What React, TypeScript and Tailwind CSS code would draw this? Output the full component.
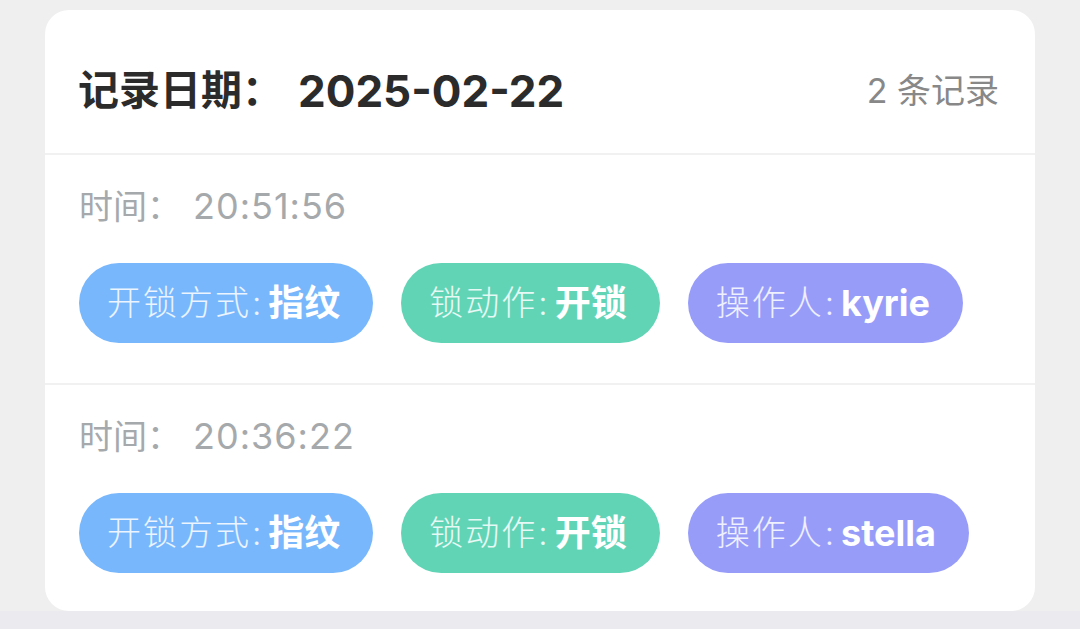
const records = [
  { time: '20:51:56', method: '指纹', action: '开锁', user: 'kyrie' },
  { time: '20:36:22', method: '指纹', action: '开锁', user: 'stella' },
]

const font = { fontFamily: 'Inter, "Noto Sans CJK SC", sans-serif' }

function Pill({ label, value, color }: { label: string; value: string; color: string }) {
  return (
    <div className={`h-[80px] rounded-full flex items-center pl-[28px] pr-[33px] ${color}`}>
      <span className="text-[34px] font-light text-white/85 leading-none tracking-[2px]">{label}</span>
      <span className="text-[33px] font-light text-white/85 leading-none ml-[1px] mr-[7px]">:</span>
      <span className="text-[36px] font-bold text-white leading-none">{value}</span>
    </div>
  )
}

export default function App() {
  return (
    <div className="min-h-screen bg-[#ebebef]" style={font}>
      <div className="bg-[#efefef] px-[45px] pt-[10px]">
        <div className="bg-white rounded-[24px] overflow-hidden">
          {/* header */}
          <div className="h-[143px] pt-[18px] pl-[33px] pr-[36px] flex items-center justify-between">
            <div className="flex items-center text-[#2b2b2b] font-bold">
              <span className="text-[41px]">记录日期：</span>
              <span className="text-[44px] ml-[15px]">2025-02-22</span>
            </div>
            <div className="text-[34px] text-[#888888]">2 条记录</div>
          </div>

          {records.map((r, i) => (
            <div key={r.time}>
              <div className="h-[2px] bg-[#f1f1f1]" />
              <div className={`px-[34px] pt-[27px] ${i === records.length - 1 ? 'pb-[38px]' : 'pb-[40px]'}`}>
                <div className="h-[48px] flex items-center text-[#a6a9ac]">
                  <span className="text-[34px]">时间：</span>
                  <span className="text-[36px] tracking-[1px] ml-[12px]">{r.time}</span>
                </div>
                <div className="mt-[33px] flex gap-[28px]">
                  <Pill label="开锁方式" value={r.method} color="bg-[#78b7fc]" />
                  <Pill label="锁动作" value={r.action} color="bg-[#62d4b6]" />
                  <Pill label="操作人" value={r.user} color="bg-[#979cf9]" />
                </div>
              </div>
            </div>
          ))}
        </div>
      </div>
    </div>
  )
}
